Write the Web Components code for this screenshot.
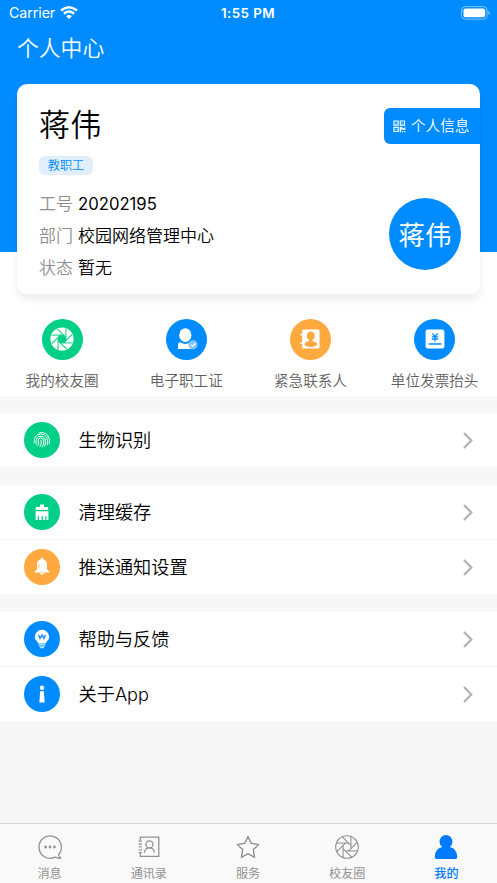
<!DOCTYPE html>
<html lang="zh-CN">
<head>
<meta charset="utf-8">
<title>个人中心</title>
<style>
html,body{margin:0;height:100%;overflow:hidden;background:#f7f7f7}
body{font-family:Inter,"Noto Sans CJK SC",sans-serif;font-weight:350;color:#000}
</style>
</head>
<body>
<profile-page></profile-page>
<script>
// Eight shutter blades: each octagon edge runs on to the rim.
const blades = Array.from({length: 8}, (_, i) => `<path d="M10.4 15.9H22.5" transform="rotate(${i * 45} 12 12)"/>`).join('');

const ICONS = {
  aperture: `<svg viewBox="0 0 24 24"><circle cx="12" cy="12" r="11.6" fill="#fff"/><g stroke="#00cf87" stroke-width="1" fill="none">${blades}</g><circle cx="12" cy="12" r="4.1" fill="#00cf87"/></svg>`,
  apertureLine: `<svg viewBox="0 0 24 24" fill="none" stroke="#929292" stroke-width="1.1"><circle cx="12" cy="12" r="11.3"/>${blades}</svg>`,
  member: `<svg viewBox="0 0 24 24" fill="#fff"><ellipse cx="11.3" cy="8.2" rx="6.1" ry="6.9"/><path d="M6.5 15.3Q11.3 18.5 16 15.3Q19.5 15.8 19.5 19V22H4V18.5Q4 15.5 6.5 15.3Z"/><circle cx="19" cy="17.8" r="4.5" fill="#82c5ff"/><path d="M17 17.7l1.6 1.5 2.8-2.8" stroke="#fff" stroke-width="1.3" fill="none"/></svg>`,
  contact: `<svg viewBox="0 0 24 24"><rect x="4.2" y="2.4" width="17.3" height="19.2" rx="1" fill="#fff"/><path d="M2.4 7.8h4M2.4 16.3h4" stroke="#fff" stroke-width="1.5"/><g fill="#ffa940"><ellipse cx="12.8" cy="8.9" rx="4" ry="4.3"/><path d="M11 11h3.6v3.6H11z"/><ellipse cx="12.8" cy="17" rx="6.3" ry="3"/></g></svg>`,
  invoice: `<svg viewBox="0 0 24 24"><rect x="2.6" y="2.4" width="18.8" height="19.2" rx="2.3" fill="#fff"/><g stroke="#008cff" fill="none" stroke-width="1.3"><path d="M9.4 6.3L12 9.7l2.6-3.4M8.8 9.8h6.4M8.8 12h6.4M12 9.5v5"/><path d="M5.6 17h12.8" stroke-width="1.5"/></g></svg>`,
  finger: `<svg viewBox="0 0 20 20" fill="none" stroke="#fff" stroke-width=".95" stroke-linecap="round"><path d="M7.2 2.9Q12.5 1.6 15.5 5.2Q18.4 8.8 17.4 13.5M2.2 12.8Q1.7 7.3 5.2 5Q9 2.7 12.7 5Q16.3 7.6 15.4 14.6M4.2 14.2Q3.1 8.5 6.6 6.7Q10.5 5.2 12.7 8.1Q14.5 11 12.9 16.2M6.1 15.5Q7.3 13 6.2 10.8Q6.2 8 8.7 8Q11.6 8.1 11.8 11Q11.9 14 10.4 16.8M8.2 16.4Q10.3 13.3 9 10.2"/></svg>`,
  brush: `<svg viewBox="0 0 20 20" fill="#fff"><path d="M8 2.5h4v2.6h3.2q1 0 1 1v2H3.7v-2q0-1 1-1H8zM3.6 9.2h12.8V18h-1.8v-3.8h-1.3V18h-2.4v-3.8H9.6V18H7v-3.8H5.7V18H3.6z"/></svg>`,
  bell: `<svg viewBox="0 0 20 20"><path d="M10 .8a1.3 1.3 0 0 1 1.3 1.4Q15 3.3 15 7.6v4.8l2.4 2v1.1H2.6v-1.1l2.4-2V7.6Q5 3.3 8.7 2.2A1.3 1.3 0 0 1 10 .8zM7.5 16h5Q12 17.8 10 17.8T7.5 16z" fill="#fff"/><path d="M7 6.8v4.5" stroke="#ffca88" stroke-width="1"/></svg>`,
  bulb: `<svg viewBox="0 0 20 20"><path d="M10 .8a7.2 7.2 0 0 1 7.2 7.2c0 3.4-3 4.1-3.4 6.5H6.2C5.8 12.1 2.8 11.4 2.8 8A7.2 7.2 0 0 1 10 .8z" fill="#fff"/><path d="M6.6 15.7h6.8M7 17.2h6" stroke="#d9efff" stroke-width="1"/><path d="M8 18.2h4l-.7 1H8.7z" fill="#fff"/><path d="M6.5 5.8l1.5 3.6 2-3.4 2 3.4 1.5-3.6" stroke="#198fff" stroke-width="1.4" fill="none"/></svg>`,
  info: `<svg viewBox="0 0 20 20" fill="#fff"><circle cx="10" cy="3.8" r="2.2"/><path d="M8.1 7.2h3.8l.7 11.3H7.4z"/></svg>`,
  chat: `<svg viewBox="0 0 24 24" fill="none" stroke="#929292" stroke-width="1.3" stroke-linejoin="round"><path d="M20.5 19.6A11.2 11.2 0 1 0 17 22.2Q20 23.5 22.8 23.2Q21.1 21.6 20.5 19.6Z"/><g fill="#929292" stroke="none"><circle cx="7.6" cy="12" r="1.4"/><circle cx="12" cy="12" r="1.4"/><circle cx="16.4" cy="12" r="1.4"/></g></svg>`,
  book: `<svg viewBox="0 0 24 24" fill="none" stroke="#929292" stroke-width="1.3"><path d="M3.3 6V2.2h18.5v19.2H3.3v-3.6M1.8 9h3M1.8 11.9h3M1.8 14.8h3M1.8 6.2h3M1.8 17.6h3"/><circle cx="12.4" cy="9.4" r="3.5"/><path d="M7.5 17.8Q7.7 12.8 12.4 12.8T17.3 17.8"/></svg>`,
  star: `<svg viewBox="0 0 24 24" fill="none" stroke="#929292" stroke-width="1.4" stroke-linejoin="round"><path d="M12 1.6l3.2 6.7 7.6 1.3-5.5 5 1.3 7.8L12 18.7l-6.6 3.7 1.3-7.8-5.5-5 7.6-1.3z"/></svg>`,
  me: `<svg viewBox="0 0 24 24" fill="#007aff"><path d="M12 0a6.6 6.6 0 0 1 6.5 6.7q0 3-2.7 5.2Q23.3 13.8 23.3 22q0 2-2 2H2.7q-2 0-2-2Q.7 13.8 8.2 11.9 5.5 9.7 5.5 6.7A6.6 6.6 0 0 1 12 0z"/></svg>`,
  qr: `<svg viewBox="0 0 13 13" fill="none" stroke="#fff" stroke-width="1.2"><path d="M1 1h4.4v4.4H1zM7.6 1H12v4.4H7.6zM1 7.6h4.4V12H1z"/><g fill="#fff" stroke="none"><path d="M2.7 2.7h1v1h-1zM9.3 2.7h1v1h-1zM2.7 9.3h1v1h-1zM7 7h2.6v1.6H12V7h.8v3.4h-2.4V9.8H8.4v3H7zM9.4 11.4h1.2v1.4H9.4zM11.5 11.4h1.3v1.4h-1.3z"/></g></svg>`
};

const define = (name, css, html) => customElements.define(name, class extends HTMLElement {
  connectedCallback() {
    if (this.shadowRoot) return;
    this.attachShadow({mode: 'open'}).innerHTML =
      `<style>*{box-sizing:border-box}svg{display:block;overflow:visible}${css}</style>` +
      (typeof html === 'function' ? html(this) : html);
  }
});

define('app-icon', ':host{display:block}svg{width:100%;height:100%}', el => ICONS[el.getAttribute('name')]);

define('status-bar', `
  :host{display:grid;grid-template-columns:1fr auto 1fr;align-items:center;height:26px;padding:0 8px 0 9px;color:#fff;font-size:14.2px;line-height:26px}
  .l{display:flex;align-items:center;gap:5px;letter-spacing:-.05px;font-weight:400}
  .l svg{margin-top:-2px}
  .t{font-weight:600;font-size:13.4px;letter-spacing:.42px;margin-right:2px}
  .b{justify-self:end;margin-right:-1px;margin-top:-1px}`, `
  <div class="l"><span>Carrier</span><svg width="18" height="13" viewBox="0 0 18 13" fill="none" stroke="#fff" stroke-width="2.4"><path d="M1 4.5Q9-2 17 4.5M3.9 7.7Q9 3.5 14.1 7.7"/><path d="M9 13L6.1 10.2Q9 8 11.9 10.2z" fill="#fff" stroke="none"/></svg></div>
  <span class="t">1:55 PM</span>
  <svg class="b" width="29" height="14" viewBox="0 0 29 14"><rect x=".6" y=".6" width="25.4" height="12.6" rx="3.6" fill="none" stroke="#7fc5ff"/><rect x="2.5" y="2.5" width="21.6" height="8.8" rx="1.8" fill="#fff"/><path d="M27.4 4.8q1.5.6 1.5 2.1t-1.5 2.1z" fill="#7fc5ff"/></svg>`);

define('info-row', `
  :host{display:flex;gap:5px;height:32.4px;line-height:32.4px;font-size:17px;white-space:nowrap}
  .k{color:#8f8f8f}`, el => `<span class="k">${el.getAttribute('label')}</span><span><slot></slot></span>`);

define('profile-card', `
  :host{display:flex;justify-content:space-between;margin:0 17px;height:210px;background:#fff;border-radius:10px;box-shadow:0 6px 9px rgba(0,0,0,.07)}
  .l{padding:18px 0 0 22px}
  .name{font-size:31.2px;line-height:47px}
  .tag{display:block;width:54px;height:19px;margin:7px 0 12.5px;border-radius:6px;background:#e0effb;color:#008cff;font-size:12.2px;line-height:20px;text-align:center}
  .num{font-size:16.7px;font-weight:400}
  .r{display:flex;flex-direction:column;align-items:flex-end;padding-top:24px}
  .btn{display:flex;align-items:center;gap:5.5px;width:96px;height:36px;padding-left:9px;border-radius:6px 0 0 6px;background:#008cff;color:#fff;font-size:14.6px;line-height:38px;white-space:nowrap}
  .btn app-icon{width:12.5px;height:12.5px}
  .av{width:72px;height:72px;margin:54px 19px 0 0;border-radius:50%;background:#008cff;color:#fff;font-size:26.5px;line-height:74px;text-align:center;font-weight:400}`, `
  <div class="l"><div class="name">蒋伟</div><span class="tag">教职工</span>
  <info-row label="工号"><span class="num">20202195</span></info-row><info-row label="部门">校园网络管理中心</info-row><info-row label="状态">暂无</info-row></div>
  <div class="r"><div class="btn"><app-icon name="qr"></app-icon><span>个人信息</span></div><div class="av">蒋伟</div></div>`);

define('quick-action', `
  :host{display:flex;flex-direction:column;align-items:center;color:#5f5f5f;font-size:14.6px;line-height:22px;white-space:nowrap}
  .c{display:grid;place-items:center;width:41px;height:41px;border-radius:50%;margin-bottom:10px}
  app-icon{width:24px;height:24px}`, el => `<div class="c" style="background:${el.getAttribute('color')}"><app-icon name="${el.getAttribute('icon')}"></app-icon></div><slot></slot>`);

define('menu-row', `
  :host{display:flex;align-items:center;height:54px;padding:0 24px;background:#fff;font-size:18.2px;line-height:55px}
  :host([divided]){height:55px;border-top:1px solid #f5f5f5}
  .c{display:grid;place-items:center;width:36px;height:36px;border-radius:50%;margin-right:18.5px}
  .c app-icon{width:20px;height:20px}
  .t{flex:1}`, el => `<div class="c" style="background:${el.getAttribute('color')}"><app-icon name="${el.getAttribute('icon')}"></app-icon></div><span class="t"><slot></slot></span><svg width="10" height="17" viewBox="0 0 10 17" fill="none" stroke="#b2b2b6" stroke-width="2.2"><path d="M1 1l7.3 7.5L1 16"/></svg>`);

define('menu-group', `:host{display:block;margin-bottom:18px}`, '<slot></slot>');

define('tab-item', `
  :host{display:flex;flex:1;flex-direction:column;align-items:center;padding-top:11px;color:#929292;font-size:12.1px;line-height:18px;gap:6px;font-weight:400}
  :host([active]){color:#007aff;font-weight:500}
  app-icon{width:24px;height:24px}`, el => `<app-icon name="${el.getAttribute('icon')}"></app-icon><span><slot></slot></span>`);

define('tab-bar', `:host{display:flex;height:60px;padding-right:1px;border-top:1px solid #d8d8d8;background:#f9f9f9}`, '<slot></slot>');

define('profile-page', `
  :host{display:flex;flex-direction:column;height:883px;width:497px;background:#f7f7f7}
  .top{height:396px;background:linear-gradient(#008cff 252px,#fff 252px)}
  h1{margin:0;height:58px;padding-left:17px;color:#fff;font-size:21.8px;font-weight:350;line-height:44px}
  .q{display:grid;grid-template-columns:repeat(4,124.2px);padding-top:24.5px}
  main{flex:1;padding-top:17px}`, `
  <div class="top"><status-bar></status-bar><h1>个人中心</h1><profile-card></profile-card>
  <div class="q"><quick-action icon="aperture" color="#00cf87">我的校友圈</quick-action><quick-action icon="member" color="#008cff">电子职工证</quick-action><quick-action icon="contact" color="#ffa940">紧急联系人</quick-action><quick-action icon="invoice" color="#008cff">单位发票抬头</quick-action></div></div>
  <main>
  <menu-group><menu-row icon="finger" color="#00cf87">生物识别</menu-row></menu-group>
  <menu-group><menu-row icon="brush" color="#00cf87">清理缓存</menu-row><menu-row divided icon="bell" color="#ffa940">推送通知设置</menu-row></menu-group>
  <menu-group><menu-row icon="bulb" color="#008cff">帮助与反馈</menu-row><menu-row divided icon="info" color="#008cff">关于App</menu-row></menu-group>
  </main>
  <tab-bar><tab-item icon="chat">消息</tab-item><tab-item icon="book">通讯录</tab-item><tab-item icon="star">服务</tab-item><tab-item icon="apertureLine">校友圈</tab-item><tab-item active icon="me">我的</tab-item></tab-bar>`);
</script>
</body>
</html>
